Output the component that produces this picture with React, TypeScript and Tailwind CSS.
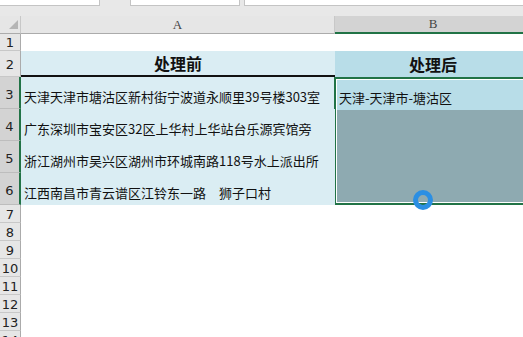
import React from "react";

const cjk = { fontFamily: '"Noto Sans CJK SC", "Noto Sans", sans-serif' };
const hdr = { fontFamily: '"Liberation Serif", serif' };
const num = { fontFamily: '"DejaVu Sans", sans-serif' };

function RowHead({ n, sel = false }: { n: number; sel?: boolean }) {
  return (
    <div
      style={num}
      className={
        sel
          ? "flex items-center justify-center pt-[4px] bg-[#d3d3d3] border-b border-[#bdbdbd] border-r-2 border-r-[#217346] text-[13px] text-[#222]"
          : "flex items-center justify-center pt-[2px] bg-[#e6e6e6] border-b border-[#c8c8c8] border-r border-r-[#ababab] text-[13px] text-[#222]"
      }
    >
      {n}
    </div>
  );
}

function DataA({ text }: { text: string }) {
  return (
    <div
      style={cjk}
      className="flex items-center pl-[3px] pt-[8px] bg-[#daedf3] text-[13px] text-[#111] whitespace-pre overflow-hidden"
    >
      {text}
    </div>
  );
}

export default function App() {
  const rowsA = [
    "天津天津市塘沽区新村街宁波道永顺里39号楼303室",
    "广东深圳市宝安区32区上华村上华站台乐源宾馆旁",
    "浙江湖州市吴兴区湖州市环城南路118号水上派出所",
    "江西南昌市青云谱区江铃东一路　狮子口村",
  ];
  const empties = [7, 8, 9, 10, 11, 12, 13, 14];
  return (
    <div className="relative w-[523px] h-[337px] overflow-hidden bg-white">
      <div className="flex h-[16px] bg-[#e8e8e8] items-start">
        <div className="w-[100px] h-[6px] bg-white border-b border-r border-[#c4c4c4]" />
        <div className="ml-[30px] w-[110px] h-[6px] bg-white border-b border-x border-[#c4c4c4]" />
        <div className="ml-[4px] flex-1 h-[6px] bg-white border-b border-l border-[#c4c4c4]" />
      </div>
      <div className="grid w-[540px] grid-cols-[21px_314px_196px] grid-rows-[18px_17px_26px_32px_32px_32px_32px_18px_18px_18px_18px_18px_18px_18px_18px]">
        <div className="relative bg-[#e6e6e6] border-b border-[#ababab] border-r border-r-[#c8c8c8]">
          <svg className="absolute left-[9px] top-[4px]" width="9" height="9" viewBox="0 0 9 9">
            <path d="M9 0 L9 9 L0 9 Z" fill="#b5b5b5" />
          </svg>
        </div>
        <div style={hdr} className="flex items-center justify-center bg-[#e6e6e6] border-b border-[#ababab] border-r border-r-[#c8c8c8] text-[13px] text-[#444]">
          A
        </div>
        <div style={hdr} className="flex items-center justify-center bg-[#d3d3d3] border-b-2 border-[#217346] text-[13px] text-[#444]">
          B
        </div>

        <RowHead n={1} />
        <div className="bg-white" />
        <div className="bg-white" />

        <RowHead n={2} />
        <div style={cjk} className="flex items-center justify-center bg-[#daedf3] border-b-2 border-[#111] text-[16px] font-bold text-[#111]">
          处理前
        </div>
        <div style={cjk} className="flex items-center justify-center bg-[#b8dde8] text-[16px] font-bold text-[#111]">
          处理后
        </div>

        <RowHead n={3} sel />
        <DataA text={rowsA[0]} />
        <div className="row-span-4 flex flex-col border-2 border-[#217346] bg-white p-px -ml-px">
          <div style={cjk} className="h-[30px] flex items-center pl-[2px] pt-[6px] bg-[#b8dde8] text-[13px] text-[#111] whitespace-nowrap">
            天津-天津市-塘沽区
          </div>
          <div className="flex-1 bg-[#8eaab1]" />
        </div>

        <RowHead n={4} sel />
        <DataA text={rowsA[1]} />
        <RowHead n={5} sel />
        <DataA text={rowsA[2]} />
        <RowHead n={6} sel />
        <DataA text={rowsA[3]} />

        {empties.map((n) => (
          <React.Fragment key={n}>
            <RowHead n={n} />
            <div className="col-span-2 bg-white" />
          </React.Fragment>
        ))}
      </div>
      <div className="absolute left-[413px] top-[190px] w-[20px] h-[20px] rounded-full border-[5px] border-[#2b8fe3]" />
    </div>
  );
}
